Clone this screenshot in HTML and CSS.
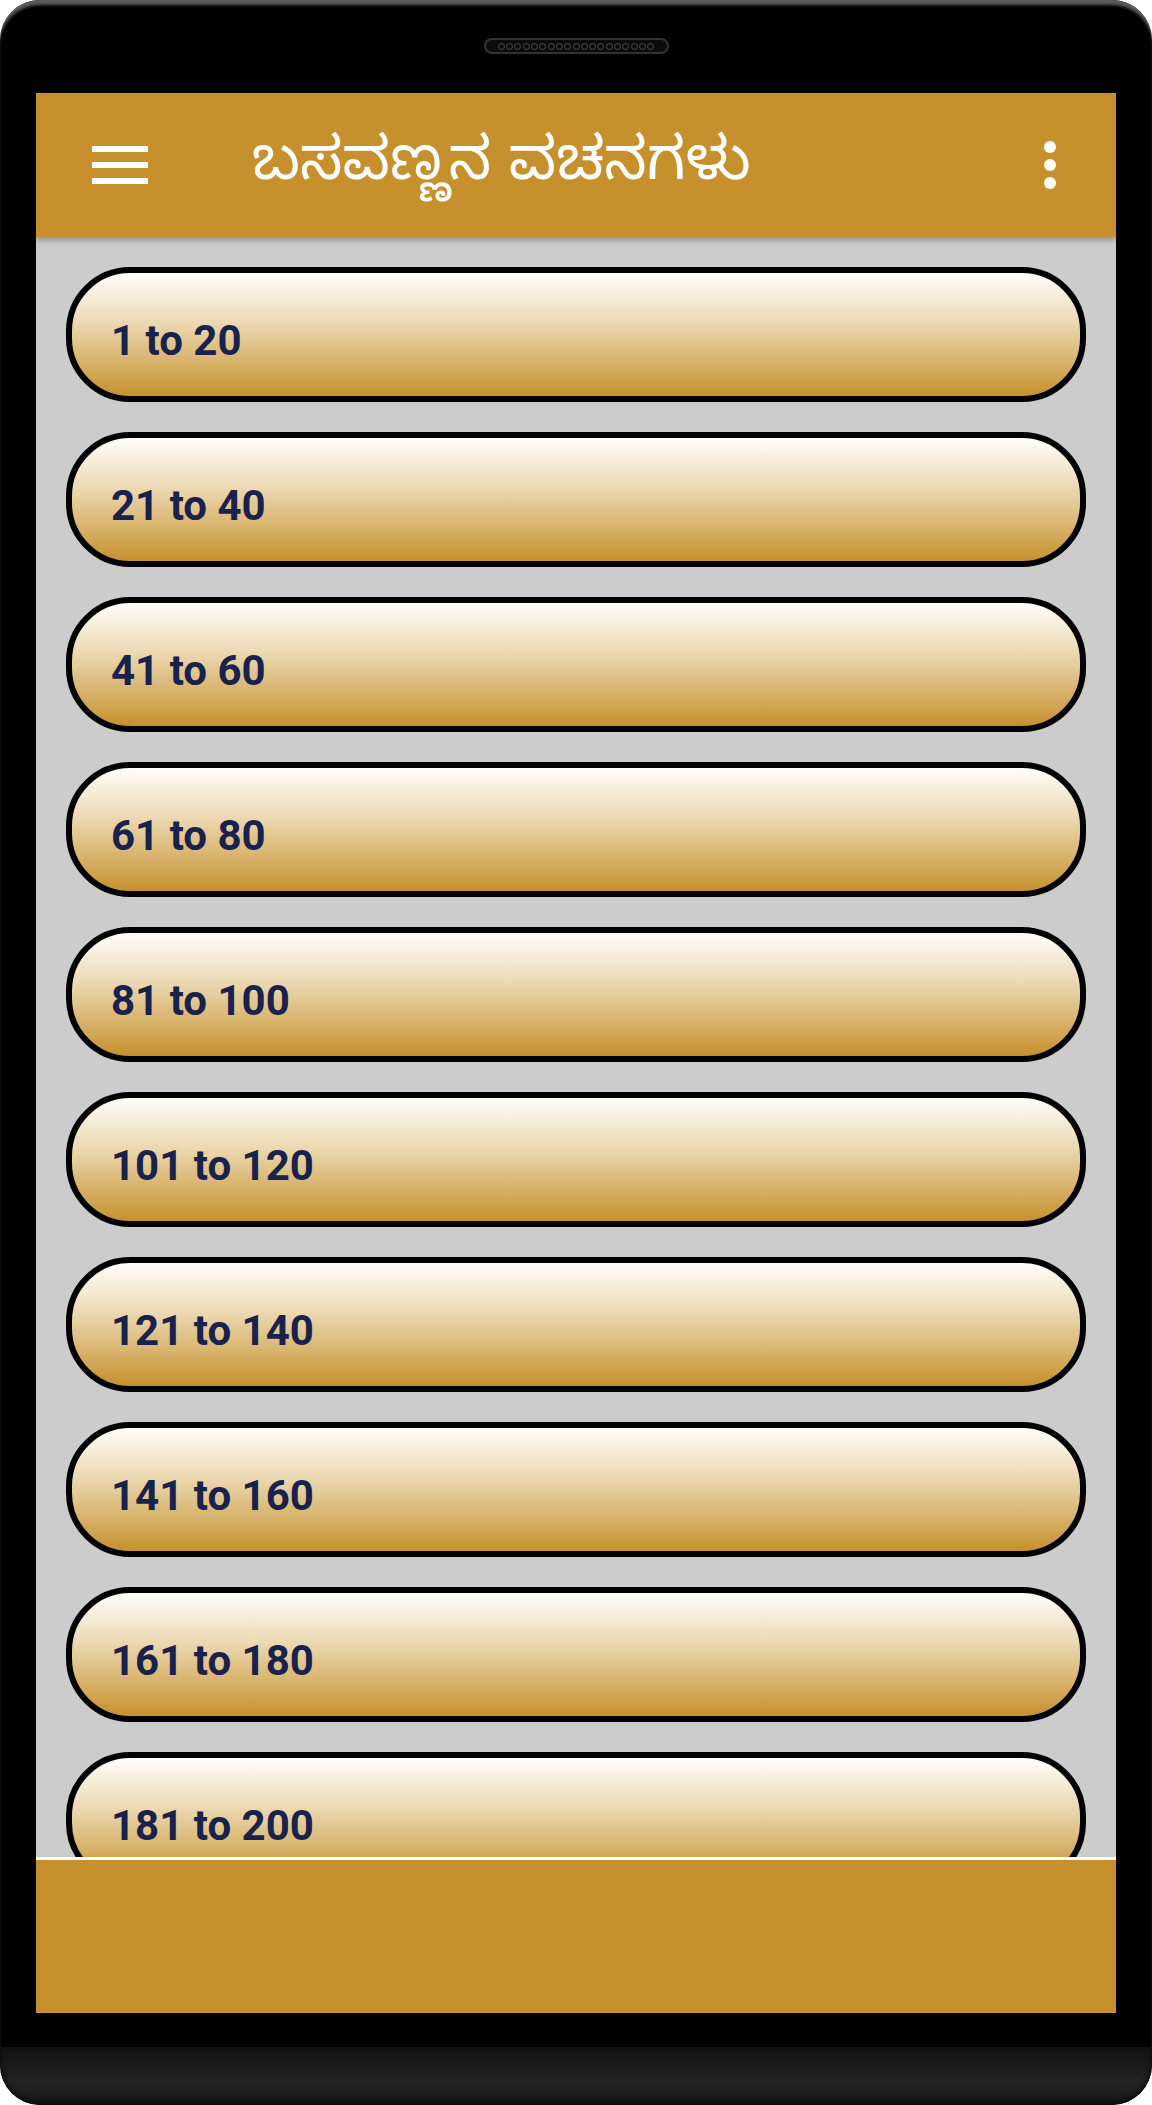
FILE: index.html
```html
<!DOCTYPE html>
<html>
<head>
<meta charset="utf-8">
<link rel="stylesheet" href="styles.css">
</head>
<body>
<div class="phone">
	<div class="top-bezel">
		<div class="speaker">
			<span></span><span></span><span></span><span></span><span></span>
			<span></span><span></span><span></span><span></span><span></span>
			<span></span><span></span><span></span><span></span><span></span>
			<span></span><span></span><span></span><span></span>
		</div>
	</div>

	<div class="screen">
		<header class="appbar">
			<div class="menu-icon">
				<i></i><i></i><i></i>
			</div>
			<h1 class="title">ಬಸವಣ್ಣನ ವಚನಗಳು</h1>
			<div class="more-icon">
				<i></i><i></i><i></i>
			</div>
		</header>

		<div class="list">
			<div class="range-btn">1 to 20</div>
			<div class="range-btn">21 to 40</div>
			<div class="range-btn">41 to 60</div>
			<div class="range-btn">61 to 80</div>
			<div class="range-btn">81 to 100</div>
			<div class="range-btn">101 to 120</div>
			<div class="range-btn">121 to 140</div>
			<div class="range-btn">141 to 160</div>
			<div class="range-btn">161 to 180</div>
			<div class="range-btn">181 to 200</div>
		</div>

		<div class="ad-bar"></div>
	</div>

	<div class="chin"></div>
</div>
</body>
</html>
```

FILE: styles.css
```css
body {
	margin: 0;
	background: #fff;
	font-family: Roboto, "Liberation Sans", sans-serif;
}

.phone {
	width: 1152px;
	height: 2105px;
	background: #000;
	border-radius: 40px;
	box-shadow: inset 0 6px 3px -1px #5a5a5a;
	display: flex;
	flex-direction: column;
	overflow: hidden;
}

.top-bezel {
	height: 93px;
	flex: none;
	display: flex;
	justify-content: center;
	padding-top: 38px;
	box-sizing: border-box;
}

.speaker {
	width: 185px;
	height: 16px;
	box-sizing: border-box;
	border: 2px solid #333;
	border-radius: 8px;
	background: #0c0c0c;
	display: flex;
	align-items: center;
	justify-content: center;
	gap: 1.3px;
}
.speaker span {
	width: 7px;
	height: 7px;
	border: 1px solid #4d4d4d;
	border-radius: 50%;
	box-sizing: border-box;
}

.screen {
	margin: 0 36px;
	height: 1920px;
	flex: none;
	display: flex;
	flex-direction: column;
}

.appbar {
	height: 144px;
	flex: none;
	background: #c6912d;
	display: flex;
	align-items: center;
	position: relative;
	z-index: 1;
	box-shadow: 0 3px 6px rgba(0, 0, 0, 0.3);
}

.menu-icon {
	margin-left: 56px;
	width: 56px;
	display: flex;
	flex-direction: column;
	gap: 10px;
}
.menu-icon i {
	display: block;
	height: 6px;
	background: #fff;
}

.title {
	margin: 0 0 0 104px;
	flex: 1;
	color: #fff;
	font-family: "Noto Sans Kannada", "Noto Sans", sans-serif;
	font-weight: normal;
	font-size: 60px;
	line-height: 1;
	padding-top: 12px;
}

.more-icon {
	margin-right: 60px;
	display: flex;
	flex-direction: column;
	gap: 6px;
}
.more-icon i {
	display: block;
	width: 12px;
	height: 12px;
	border-radius: 50%;
	background: #fff;
}

.list {
	flex: 1;
	background: #cccccc;
	overflow: hidden;
	padding: 30px 30px 0;
	display: flex;
	flex-direction: column;
	gap: 30px;
}

.range-btn {
	flex: none;
	height: 135px;
	box-sizing: border-box;
	border: 6px solid #000;
	border-radius: 64px;
	background: linear-gradient(#fffefb, #ecd9b3 40%, #c6912d);
	display: flex;
	align-items: center;
	padding: 11px 0 0 39px;
	color: #19224d;
	font-size: 42px;
	font-weight: bold;
}

.ad-bar {
	height: 153px;
	flex: none;
	border-top: 3px solid #fff;
	background: #c6912d;
}

.chin {
	margin-top: 34px;
	flex: 1;
	background: linear-gradient(#101010, #242424 60%, #1a1a1a);
	border-radius: 0 0 40px 40px;
	box-shadow: inset 0 -4px 6px rgba(0, 0, 0, 0.6);
}
```
